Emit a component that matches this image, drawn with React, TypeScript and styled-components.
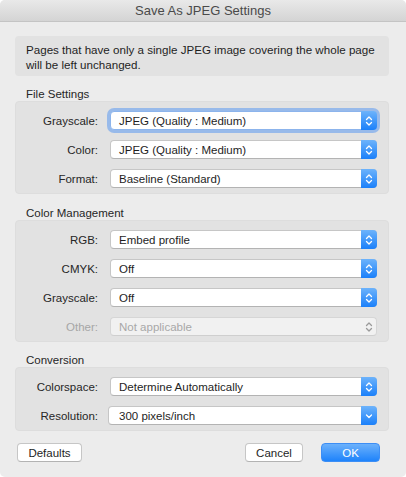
import React from "react";
import styled, { createGlobalStyle, css } from "styled-components";

const Global = createGlobalStyle`
  html, body { margin: 0; padding: 0; background: #ffffff; }
  body { font-family: "Liberation Sans", Arial, sans-serif; }
  * { box-sizing: border-box; }
`;

const Window = styled.div`
  width: 406px;
  height: 477px;
  background: #ececec;
  border-radius: 5px;
  overflow: hidden;
  display: flex;
  flex-direction: column;
`;

const TitleBar = styled.div`
  height: 22px;
  flex: none;
  background: linear-gradient(#e9e9e9, #d4d4d4);
  border-bottom: 1px solid #c4c4c4;
  display: flex;
  align-items: center;
  justify-content: center;
  font-size: 13px;
  color: #4a4a4a;
  padding-bottom: 1px;
`;

const Body = styled.div`
  padding: 14px 17px 0 15px;
  display: flex;
  flex-direction: column;
`;

const Notice = styled.div`
  background: #e2e2e2;
  border-radius: 4px;
  padding: 6px 11px 4px;
  font-size: 11.6px;
  line-height: 15px;
  color: #1e1e1e;
  height: 40px;
`;

const SectionTitle = styled.div<{ $top: number }>`
  margin-top: ${(p) => p.$top}px;
  padding-left: 11px;
  font-size: 11.5px;
  line-height: 14px;
  height: 14px;
  color: #262626;
`;

const Group = styled.div`
  background: #e2e2e2;
  border: 1px solid #dddddd;
  border-radius: 4px;
  padding: 9px 11px 5px 0;
  display: flex;
  flex-direction: column;
  gap: 10px;
`;

const Row = styled.div`
  display: grid;
  grid-template-columns: 82px 1fr;
  column-gap: 12px;
  align-items: center;
  height: 19px;
`;

const Label = styled.div<{ $disabled?: boolean }>`
  text-align: right;
  font-size: 11.5px;
  color: ${(p) => (p.$disabled ? "#a6a6a6" : "#262626")};
`;

const Select = styled.div<{ $disabled?: boolean; $focused?: boolean; $wide?: boolean }>`
  position: relative;
  height: 19px;
  margin-left: ${(p) => (p.$wide ? "-2px" : "0")};
  background: ${(p) => (p.$disabled ? "#f1f1f1" : "#ffffff")};
  border: 1px solid ${(p) => (p.$disabled ? "#d6d6d6" : "#c6c6c6")};
  border-bottom-color: ${(p) => (p.$disabled ? "#cfcfcf" : "#b3b3b3")};
  border-radius: 4px;
  display: flex;
  align-items: center;
  padding-left: ${(p) => (p.$wide ? "10px" : "8px")};
  font-size: 11.5px;
  color: ${(p) => (p.$disabled ? "#a8a8a8" : "#1e1e1e")};
  ${(p) =>
    p.$focused &&
    css`
      box-shadow: 0 0 0 3px rgba(104, 160, 240, 0.6);
      border-color: #8cb4ec;
    `}
`;

const Stepper = styled.div<{ $disabled?: boolean }>`
  position: absolute;
  top: -1px;
  right: -1px;
  bottom: -1px;
  width: 16px;
  border-radius: 0 4px 4px 0;
  display: flex;
  align-items: center;
  justify-content: center;
  background: ${(p) =>
    p.$disabled ? "transparent" : "linear-gradient(#6db3fb, #1b80fa)"};
`;

const ButtonBar = styled.div`
  margin-top: 12px;
  display: flex;
  align-items: center;
  padding-left: 2px;
  padding-right: 9px;
`;

const Button = styled.button<{ $primary?: boolean; $w: number; $gap?: number }>`
  width: ${(p) => p.$w}px;
  height: 19px;
  margin-left: ${(p) => p.$gap ?? 0}px;
  border-radius: 4px;
  font-family: "Liberation Sans", Arial, sans-serif;
  font-size: 11.5px;
  padding: 0;
  display: flex;
  align-items: center;
  justify-content: center;
  ${(p) =>
    p.$primary
      ? css`
          background: linear-gradient(#6cb1fb, #1e83fb);
          border: 1px solid #3d8ef5;
          color: #ffffff;
        `
      : css`
          background: #ffffff;
          border: 1px solid #c6c6c6;
          border-bottom-color: #b3b3b3;
          color: #1e1e1e;
        `}
`;

const Spacer = styled.div`
  flex: 1;
`;

function UpDown({ color }: { color: string }) {
  return (
    <svg width="8" height="12" viewBox="0 0 8 12">
      <path d="M1.5 4.5 L4 2 L6.5 4.5" fill="none" stroke={color} strokeWidth="1.3" strokeLinecap="round" strokeLinejoin="round" />
      <path d="M1.5 7.5 L4 10 L6.5 7.5" fill="none" stroke={color} strokeWidth="1.3" strokeLinecap="round" strokeLinejoin="round" />
    </svg>
  );
}

function Down() {
  return (
    <svg width="8" height="12" viewBox="0 0 8 12">
      <path d="M1.5 5 L4 7.5 L6.5 5" fill="none" stroke="#ffffff" strokeWidth="1.3" strokeLinecap="round" strokeLinejoin="round" />
    </svg>
  );
}

type Field = {
  label: string;
  value: string;
  disabled?: boolean;
  focused?: boolean;
  pulldown?: boolean;
};

function FieldRow({ f }: { f: Field }) {
  return (
    <Row>
      <Label $disabled={f.disabled}>{f.label}</Label>
      <Select $disabled={f.disabled} $focused={f.focused} $wide={f.pulldown}>
        {f.value}
        <Stepper $disabled={f.disabled}>
          {f.pulldown ? <Down /> : <UpDown color={f.disabled ? "#9a9a9a" : "#ffffff"} />}
        </Stepper>
      </Select>
    </Row>
  );
}

const sections: { title: string; top: number; fields: Field[] }[] = [
  {
    title: "File Settings",
    top: 11,
    fields: [
      { label: "Grayscale:", value: "JPEG (Quality : Medium)", focused: true },
      { label: "Color:", value: "JPEG (Quality : Medium)" },
      { label: "Format:", value: "Baseline (Standard)" },
    ],
  },
  {
    title: "Color Management",
    top: 12,
    fields: [
      { label: "RGB:", value: "Embed profile" },
      { label: "CMYK:", value: "Off" },
      { label: "Grayscale:", value: "Off" },
      { label: "Other:", value: "Not applicable", disabled: true },
    ],
  },
  {
    title: "Conversion",
    top: 11,
    fields: [
      { label: "Colorspace:", value: "Determine Automatically" },
      { label: "Resolution:", value: "300 pixels/inch", pulldown: true },
    ],
  },
];

export default function App() {
  return (
    <>
      <Global />
      <Window>
        <TitleBar>Save As JPEG Settings</TitleBar>
        <Body>
          <Notice>
            Pages that have only a single JPEG image covering the whole page
            will be left unchanged.
          </Notice>
          {sections.map((s) => (
            <React.Fragment key={s.title}>
              <SectionTitle $top={s.top}>{s.title}</SectionTitle>
              <Group>
                {s.fields.map((f) => (
                  <FieldRow key={f.label + f.value} f={f} />
                ))}
              </Group>
            </React.Fragment>
          ))}
          <ButtonBar>
            <Button $w={65}>Defaults</Button>
            <Spacer />
            <Button $w={58}>Cancel</Button>
            <Button $w={59} $gap={18} $primary>
              OK
            </Button>
          </ButtonBar>
        </Body>
      </Window>
    </>
  );
}
